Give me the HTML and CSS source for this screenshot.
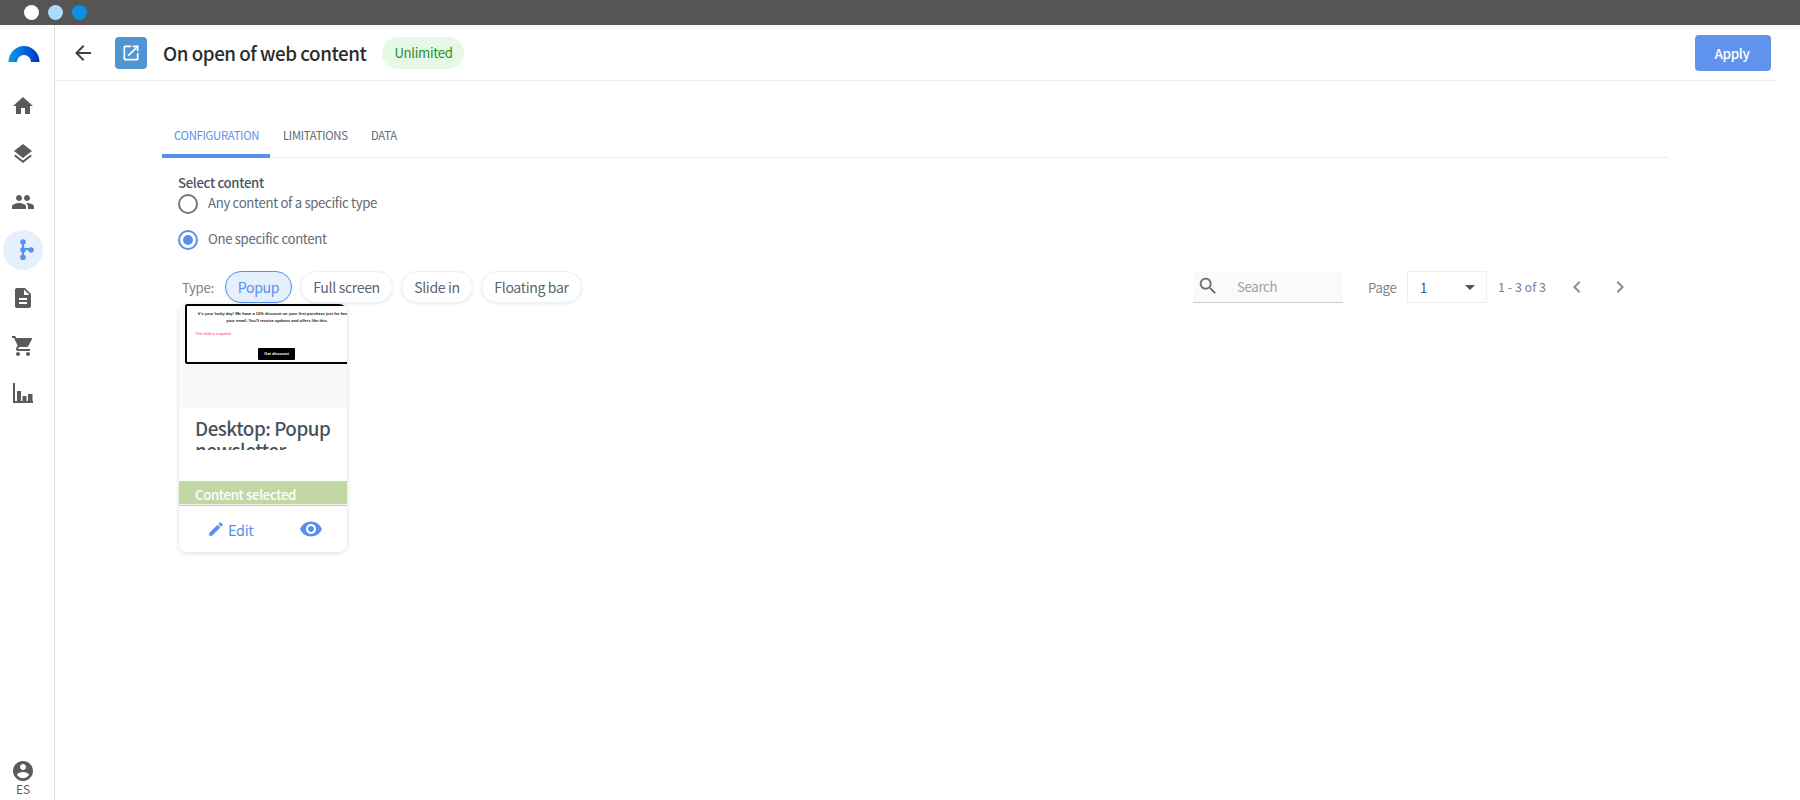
FILE: index.html
```html
<!DOCTYPE html>
<html lang="en">
<head>
<meta charset="utf-8">
<title>On open of web content</title>
<link rel="stylesheet" href="styles.css">
</head>
<body>
<div class="topbar">
  <span class="dot dot-white"></span>
  <span class="dot dot-light"></span>
  <span class="dot dot-blue"></span>
</div>
<div class="app">
  <nav class="sidebar">
    <svg class="logo" viewBox="0 0 32 16" width="32" height="16">
      <defs>
        <linearGradient id="lg" x1="0" x2="1" y1="0" y2="0">
          <stop offset="0" stop-color="#0a9ee8"/>
          <stop offset="1" stop-color="#0030c8"/>
        </linearGradient>
      </defs>
      <path fill="url(#lg)" d="M0.5 16A15.5 16 0 0 1 31.5 16H23A7 7 0 0 0 9 16Z"/>
    </svg>
    <div class="nav-list">
      <a class="nav-item"><svg viewBox="0 0 24 24"><path d="M10 20v-6h4v6h5v-8h3L12 3 2 12h3v8z"/></svg></a>
      <a class="nav-item"><svg viewBox="0 0 24 24"><path d="M11.99 18.54l-7.37-5.73L3 14.07l9 7 9-7-1.63-1.27-7.38 5.74zM12 16l7.36-5.73L21 9l-9-7-9 7 1.63 1.27L12 16z"/></svg></a>
      <a class="nav-item"><svg viewBox="0 0 24 24"><path d="M16 11c1.66 0 2.99-1.34 2.99-3S17.66 5 16 5c-1.66 0-3 1.34-3 3s1.34 3 3 3zm-8 0c1.66 0 2.99-1.34 2.99-3S9.66 5 8 5C6.34 5 5 6.34 5 8s1.34 3 3 3zm0 2c-2.33 0-7 1.17-7 3.5V19h14v-2.5c0-2.33-4.67-3.5-7-3.5zm8 0c-.29 0-.62.02-.97.05 1.16.84 1.97 1.97 1.97 3.45V19h6v-2.5c0-2.33-4.67-3.5-7-3.5z"/></svg></a>
      <a class="nav-item nav-active"><span class="nav-circle"><svg class="flow" viewBox="0 0 40 40"><path d="M20 11V27M20 19H28" fill="none" stroke-width="2"/><circle cx="20" cy="12" r="2.8"/><circle cx="20" cy="20" r="2.8"/><circle cx="20" cy="27.3" r="2.8"/><circle cx="28" cy="20" r="2.8"/></svg></span></a>
      <a class="nav-item"><svg viewBox="0 0 24 24"><path d="M14 2H6c-1.1 0-1.99.9-1.99 2L4 20c0 1.1.89 2 1.99 2H18c1.1 0 2-.9 2-2V8l-6-6zm2 16H8v-2h8v2zm0-4H8v-2h8v2zm-3-5V3.5L18.5 9H13z"/></svg></a>
      <a class="nav-item"><svg viewBox="0 0 24 24"><path d="M7 18c-1.1 0-1.99.9-1.99 2S5.9 22 7 22s2-.9 2-2-.9-2-2-2zM1 2v2h2l3.6 7.59-1.35 2.45c-.16.28-.25.61-.25.96 0 1.1.9 2 2 2h12v-2H7.42c-.14 0-.25-.11-.25-.25l.03-.12.9-1.63h7.45c.75 0 1.41-.41 1.75-1.03l3.58-6.49c.08-.14.12-.31.12-.48 0-.55-.45-1-1-1H5.21l-.94-2H1zm16 16c-1.1 0-1.99.9-1.99 2s.89 2 1.99 2 2-.9 2-2-.9-2-2-2z"/></svg></a>
      <a class="nav-item nav-chart"><svg viewBox="0 0 24 24"><path d="M2 2h2v18h18v2H2zM6 10h4v10H6zM11.500 15h4v5h-4zM17 13h4.500v7H17z"/></svg></a>
    </div>
    <div class="profile">
      <svg viewBox="0 0 24 24"><path d="M12 2C6.48 2 2 6.48 2 12s4.48 10 10 10 10-4.48 10-10S17.52 2 12 2zm0 3c1.66 0 3 1.34 3 3s-1.34 3-3 3-3-1.34-3-3 1.34-3 3-3zm0 14.2c-2.5 0-4.71-1.28-6-3.22.03-1.99 4-3.08 6-3.08 1.99 0 5.97 1.09 6 3.08-1.29 1.94-3.5 3.22-6 3.22z"/></svg>
      <span class="lang">ES</span>
    </div>
  </nav>
  <main class="main">
    <header class="header">
      <svg class="back" viewBox="0 0 24 24"><path d="M20 11H7.830l5.590-5.590L12 4l-8 8 8 8 1.410-1.410L7.830 13H20v-2z"/></svg>
      <span class="type-icon"><svg viewBox="0 0 24 24"><path d="M19 19H5V5h7V3H5c-1.110 0-2 .9-2 2v14c0 1.100.89 2 2 2h14c1.100 0 2-.9 2-2v-7h-2v7zM14 3v2h3.590l-9.830 9.830 1.410 1.410L19 6.410V10h2V3h-7z"/></svg></span>
      <h1 class="title">On open of web content</h1>
      <span class="badge">Unlimited</span>
      <button class="apply">Apply</button>
    </header>
    <section class="content">
      <div class="tabs">
        <a class="tab tab-active">CONFIGURATION</a>
        <a class="tab tab-lim">LIMITATIONS</a>
        <a class="tab">DATA</a>
      </div>
      <div class="form">
        <div class="form-label">Select content</div>
        <label class="radio-row"><span class="radio"></span><span>Any content of a specific type</span></label>
        <label class="radio-row radio-row-second"><span class="radio radio-on"></span><span>One specific content</span></label>
      </div>
      <div class="toolbar">
        <span class="type-label">Type:</span>
        <span class="chip chip-on chip-popup">Popup</span>
        <span class="chip chip-full">Full screen</span>
        <span class="chip chip-slide">Slide in</span>
        <span class="chip chip-bar">Floating bar</span>
        <div class="tools-right">
          <div class="search">
            <svg viewBox="0 0 24 24"><path d="M15.500 14h-.79l-.28-.27C15.410 12.590 16 11.110 16 9.500 16 5.910 13.090 3 9.500 3S3 5.910 3 9.500 5.910 16 9.500 16c1.610 0 3.090-.59 4.230-1.570l.27.28v.79l5 4.990L20.490 19l-4.990-5zm-6 0C7.010 14 5 11.990 5 9.500S7.010 5 9.500 5 14 7.010 14 9.500 11.990 14 9.500 14z"/></svg>
            <span>Search</span>
          </div>
          <span class="page-label">Page</span>
          <div class="select"><span>1</span><i class="caret"></i></div>
          <span class="range">1 - 3 of 3</span>
          <svg class="chev chev-prev" viewBox="0 0 24 24"><path d="M15.410 7.410L14 6l-6 6 6 6 1.410-1.410L10.830 12z"/></svg>
          <svg class="chev chev-next" viewBox="0 0 24 24"><path d="M10 6L8.590 7.410 13.170 12l-4.580 4.590L10 18l6-6z"/></svg>
        </div>
      </div>
      <article class="card">
        <div class="thumb">
          <div class="preview">
            <p class="preview-text">It's your lucky day! We have a 10% discount on your first purchase just for heading<br>your email. You'll receive updates and offers like this.</p>
            <p class="preview-error">This field is required</p>
            <span class="preview-btn">Get discount</span>
          </div>
        </div>
        <div class="card-title">Desktop: Popup newsletter</div>
        <div class="card-status">Content selected</div>
        <div class="card-actions">
          <a class="edit"><svg viewBox="0 0 24 24"><path d="M3 17.250V21h3.750L17.810 9.940l-3.750-3.750L3 17.250zM20.710 7.040c.39-.39.39-1.020 0-1.410l-2.340-2.340c-.39-.39-1.020-.39-1.410 0l-1.830 1.830 3.750 3.750 1.830-1.830z"/></svg>Edit</a>
          <svg class="eye" viewBox="0 0 24 24"><path d="M12 4.500C7 4.500 2.730 7.610 1 12c1.730 4.390 6 7.500 11 7.500s9.270-3.110 11-7.500c-1.730-4.390-6-7.500-11-7.500zM12 17c-2.760 0-5-2.240-5-5s2.240-5 5-5 5 2.240 5 5-2.240 5-5 5zm0-8c-1.660 0-3 1.340-3 3s1.340 3 3 3 3-1.340 3-3-1.340-3-3-3z"/></svg>
        </div>
      </article>
    </section>
  </main>
</div>
</body>
</html>
```
FILE: styles.css
```css
* { box-sizing: border-box; letter-spacing: -0.025em; }
html, body { height: 100%; }
body {
  margin: 0;
  height: 800px;
  overflow: hidden;
  background: #fff;
  font-family: "Noto Sans CJK SC", "Noto Sans", sans-serif;
  color: #47535f;
  display: flex;
  flex-direction: column;
}
svg { display: block; }

.topbar {
  height: 25px;
  flex: none;
  background: #555;
  display: flex;
  align-items: center;
  gap: 9px;
  padding-left: 24px;
}
.dot { width: 15px; height: 15px; border-radius: 50%; }
.dot-white { background: #fff; }
.dot-light { background: #aedbfb; }
.dot-blue { background: #0c8fe6; }

.app { flex: 1; display: flex; min-height: 0; }

.sidebar {
  width: 55px;
  flex: none;
  border-right: 1px solid #dcdcdc;
  display: flex;
  flex-direction: column;
  padding-top: 21px;
}
.logo { margin-left: 8px; }
.nav-list { margin-top: 20px; display: flex; flex-direction: column; }
.nav-item {
  height: 48px;
  display: flex;
  align-items: center;
  justify-content: center;
  padding-right: 8px;
}
.nav-item svg { width: 24px; height: 24px; fill: #5b5b5b; }
.nav-chart { height: 46px; }
.nav-circle {
  width: 40px;
  height: 40px;
  border-radius: 50%;
  background: #e5f0fd;
  display: block;
}
.nav-item .flow { width: 40px; height: 40px; fill: #5b8fef; stroke: #5b8fef; stroke-width: 0; }
.flow path { stroke-width: 2; }
.profile {
  margin-top: auto;
  padding-bottom: 6px;
  display: flex;
  flex-direction: column;
  align-items: center;
  padding-right: 8px;
}
.profile svg { width: 24px; height: 24px; fill: #5b5b5b; }
.lang { font-size: 12px; line-height: 11px; color: #5b5b5b; letter-spacing: 0; }

.main { flex: 1; min-width: 0; display: flex; flex-direction: column; }

.header {
  height: 56px;
  margin-right: 24px;
  border-bottom: 1px solid #ececec;
  display: flex;
  align-items: center;
  padding: 0 5px 0 16px;
  flex: none;
}
.back { width: 24px; height: 24px; fill: #3f3f3f; }
.type-icon {
  width: 32px;
  height: 32px;
  margin-left: 20px;
  border-radius: 4px;
  background: #5096d4;
  display: flex;
  align-items: center;
  justify-content: center;
}
.type-icon svg { width: 20px; height: 20px; fill: #fff; }
.title {
  margin: 0 0 0 16px;
  font-size: 18.800px;
  line-height: 28px;
  font-weight: 500;
  color: #2b2b2b;
}
.badge {
  margin-left: 16px;
  height: 32px;
  width: 82px;
  border-radius: 16px;
  background: #e6f9e6;
  color: #1f8f2b;
  font-size: 13.200px;
  line-height: 32px;
  text-align: center;
}
.apply {
  margin-left: auto;
  width: 76px;
  height: 36px;
  border: 0;
  border-radius: 4px;
  background: #5f93ee;
  color: #fff;
  font: 500 13.500px/36px "Noto Sans CJK SC", "Noto Sans", sans-serif;
  padding: 0 2px 0 0;
}

.content {
  margin-left: 107px;
  width: 1506px;
  padding-top: 36px;
}
.tabs {
  height: 41px;
  border-bottom: 1px solid #ececec;
  display: flex;
}
.tab {
  height: 41px;
  padding: 0 12px;
  font-size: 11.300px;
  line-height: 36px;
  color: #5f6a75;
  margin-right: 1px;
}
.tab-active {
  color: #5b8fec;
  border-bottom: 4px solid #5b8fec;
  border-radius: 4px 4px 0 0;
  width: 108px;
}
.tab-lim { width: 87px; }

.form { padding: 16px 0 0 16px; }
.form-label {
  font-size: 13.200px;
  line-height: 18px;
  font-weight: 500;
  color: #47535f;
}
.radio-row {
  display: flex;
  align-items: flex-start;
  gap: 10px;
  height: 24px;
  font-size: 13.200px;
  line-height: 20px;
  color: #5f6a75;
  margin-top: 1px;
}
.radio-row-second { margin-top: 12px; }
.radio {
  width: 20px;
  height: 20px;
  border: 2px solid #777;
  border-radius: 50%;
  margin-top: 1px;
  position: relative;
  flex: none;
}
.radio-on { border-color: #5b8fec; }
.radio-on::after {
  content: "";
  position: absolute;
  inset: 3px;
  border-radius: 50%;
  background: #5b8fec;
}

.toolbar {
  display: flex;
  align-items: center;
  height: 32px;
  margin-top: 18px;
  padding-left: 20px;
}
.type-label { font-size: 13.200px; color: #7b838b; width: 43px; }
.chip {
  height: 32px;
  border-radius: 16px;
  background: #fff;
  border: 1px solid #eef0f2;
  box-shadow: 0 1px 3px rgba(0, 0, 0, .08);
  font-size: 14.100px;
  line-height: 30px;
  text-align: center;
  color: #5c6670;
  margin-right: 8px;
}
.chip-on { background: #e6f0fd; border-color: #5b8fec; color: #5b8fec; }
.chip-popup { width: 67px; }
.chip-full { width: 93px; }
.chip-slide { width: 72px; }
.chip-bar { width: 101px; }

.tools-right { margin-left: auto; display: flex; align-items: center; padding-right: 36px; height: 32px; }
.search {
  width: 150px;
  height: 32px;
  background: #fafafa;
  border-bottom: 1px solid #c8c8cc;
  display: flex;
  align-items: center;
  padding-left: 4px;
  font-size: 13.200px;
  color: #9aa0a6;
}
.search svg { width: 22px; height: 22px; fill: #6e6e6e; margin-right: 18px; margin-bottom: 2px; }
.page-label { margin-left: 25px; font-size: 13.200px; color: #7b838b; width: 39px; }
.select {
  width: 80px;
  height: 32px;
  border: 1px solid #eeeeee;
  display: flex;
  align-items: center;
  justify-content: space-between;
  padding: 0 11px 0 12px;
  font-size: 13.200px;
  color: #47535f;
}
.caret {
  width: 0;
  height: 0;
  border-left: 5px solid transparent;
  border-right: 5px solid transparent;
  border-top: 5px solid #47535f;
}
.range { margin-left: 11px; font-size: 12.500px; letter-spacing: 0; color: #7b838b; width: 67px; margin-bottom: 2px; }
.chev { width: 24px; height: 24px; fill: #8a8f94; flex: none; }
.chev-next { margin-left: 19px; }

.card {
  width: 168px;
  height: 248px;
  margin: 1px 0 0 17px;
  border-radius: 8px;
  background: #fff;
  box-shadow: 0 1px 5px rgba(0, 0, 0, .14);
  overflow: hidden;
  display: flex;
  flex-direction: column;
  position: relative;
}
.thumb {
  height: 104px;
  flex: none;
  background: #f7f8fa;
  overflow: hidden;
  padding-left: 6px;
}
.preview {
  width: 190px;
  height: 60px;
  background: #fff;
  border: 2px solid #000;
  border-radius: 2px;
  position: relative;
  font-family: "Liberation Sans", sans-serif;
  font-size: 4px;
  line-height: 7px;
}
.preview * { letter-spacing: 0; }
.preview-text { margin: 3.500px 0 0; padding-right: 6px; white-space: nowrap; text-align: center; color: #222; font-weight: 700; }
.preview-error { margin: 6px 0 0 8px; color: #f0435a; }
.preview-btn {
  position: absolute;
  left: 71px;
  top: 42px;
  width: 37px;
  height: 12px;
  background: #000;
  color: #fff;
  text-align: center;
  line-height: 12px;
  border-radius: 1px;
  font-weight: 700;
}
.card-title {
  height: 33px;
  margin-top: 9px;
  padding: 0 4px 0 16px;
  overflow: hidden;
  font-size: 18.800px;
  line-height: 22px;
  font-weight: 500;
  color: #47535f;
  flex: none;
}
.card-status {
  margin-top: 31px;
  height: 25px;
  background: #c3d7a4;
  box-shadow: inset 0 -1px 0 #c3d7a4, inset 0 -2px 0 #eef3e4;
  padding-left: 16px;
  color: #fff;
  font-size: 13.200px;
  line-height: 27px;
  font-weight: 500;
  flex: none;
}
.card-actions {
  flex: 1;
  display: flex;
  align-items: center;
  padding: 0 24px 0 28px;
  justify-content: space-between;
}
.edit {
  display: flex;
  align-items: center;
  gap: 3px;
  font-size: 14.500px;
  color: #5b8fec;
}
.edit svg { width: 18px; height: 18px; fill: #5b8fec; }
.eye { width: 24px; height: 24px; fill: #5b8fec; }
```
